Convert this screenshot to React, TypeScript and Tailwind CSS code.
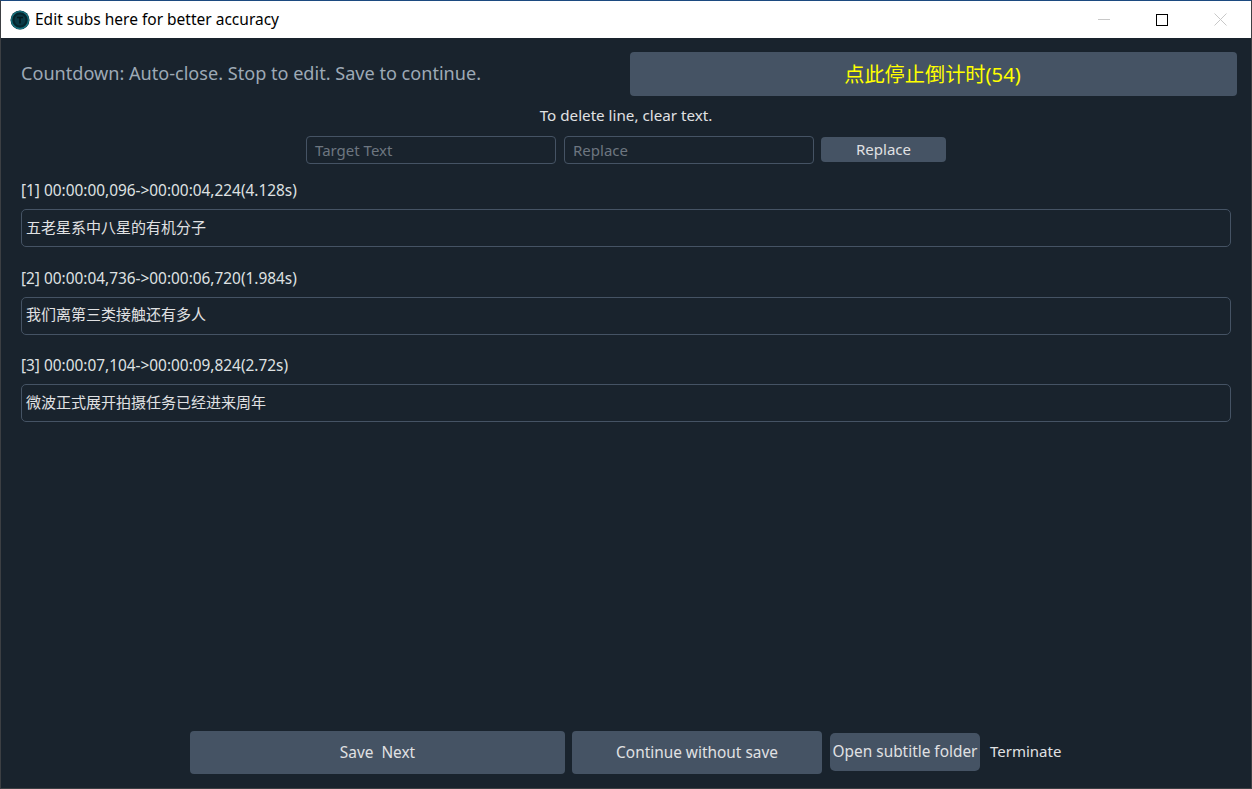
const fontFamily = "font-['Noto_Sans','Noto_Sans_CJK_SC',sans-serif]";

const rows = [
  { label: "[1] 00:00:00,096->00:00:04,224(4.128s)", text: "五老星系中八星的有机分子" },
  { label: "[2] 00:00:04,736->00:00:06,720(1.984s)", text: "我们离第三类接触还有多人" },
  { label: "[3] 00:00:07,104->00:00:09,824(2.72s)", text: "微波正式展开拍摄任务已经进来周年" },
];

function AppIcon() {
  return (
    <svg width="20" height="20" viewBox="0 0 20 20" className="shrink-0">
      <circle cx="10" cy="10" r="9.5" fill="#06262d" />
      <circle cx="10" cy="10" r="8.5" fill="none" stroke="#17727f" strokeWidth="1.5" />
      <circle cx="10" cy="10" r="5.5" fill="#0b3a45" />
      <path d="M7 7.5h6M10 7.5v6" stroke="#03181d" strokeWidth="1.6" fill="none" />
    </svg>
  );
}

function WindowButtons() {
  return (
    <div className="ml-auto flex items-center">
      <svg width="12" height="12" viewBox="0 0 12 12" className="mr-[46px]">
        <path d="M0 5.5h12" stroke="#c8c8c8" strokeWidth="1" />
      </svg>
      <svg width="12" height="12" viewBox="0 0 12 12" className="mr-[46px]">
        <rect x="0.5" y="0.5" width="11" height="11" fill="none" stroke="#000" strokeWidth="1" />
      </svg>
      <svg width="13" height="13" viewBox="0 0 13 13" className="mr-[24px]">
        <path d="M0.5 0.5l12 12M12.5 0.5l-12 12" stroke="#c8c8c8" strokeWidth="1" fill="none" />
      </svg>
    </div>
  );
}

function TitleBar() {
  return (
    <div className="flex h-[37px] shrink-0 items-center bg-white pl-[9px]">
      <AppIcon />
      <span className="ml-[5px] text-[15.5px] text-black">Edit subs here for better accuracy</span>
      <WindowButtons />
    </div>
  );
}

function SubRow({ label, text }: { label: string; text: string }) {
  return (
    <div className="mb-[21.5px] flex flex-col">
      <div className="flex h-[20px] items-center text-[15.4px] text-[#dfe1e2]">{label}</div>
      <div className="mt-[8px] flex h-[38px] items-center rounded-[5px] border border-[#455364] pb-[2px] pl-[4px] text-[15px] text-[#e0e1e3]">
        {text}
      </div>
    </div>
  );
}

export default function App() {
  return (
    <div className={`flex h-[789px] w-[1252px] flex-col overflow-hidden border border-[#3c3f43] border-t-[#1c4a80] bg-[#19232d] ${fontFamily}`}>
      <TitleBar />

      <div className="flex flex-1 flex-col pl-[20px] pr-[14px]">
        <div className="mt-[14px] flex h-[44px] items-center justify-between">
          <span className="text-[18.1px] text-[#9da9b5]">Countdown: Auto-close. Stop to edit. Save to continue.</span>
          <button className="h-[44px] w-[607px] rounded-[4px] bg-[#455364] pr-[2px] text-[20.2px] text-[#ffff00]">
            点此停止倒计时(54)
          </button>
        </div>

        <div className="mt-[9px] flex h-[20px] items-center justify-center pr-[6px] text-[15.2px] text-[#e0e1e3]">
          To delete line, clear text.
        </div>

        <div className="mt-[11px] flex h-[28px] items-start pl-[285px]">
          <div className="flex h-[28px] w-[250px] items-center rounded-[4px] border border-[#455364] pl-[8px] text-[15px] text-[#6d7680]">
            Target Text
          </div>
          <div className="ml-[8px] flex h-[28px] w-[250px] items-center rounded-[4px] border border-[#455364] pl-[8px] text-[15px] text-[#6d7680]">
            Replace
          </div>
          <button className="mt-[1px] ml-[7px] h-[25px] w-[125px] rounded-[4px] bg-[#455364] text-[15px] text-[#e0e1e3]">
            Replace
          </button>
        </div>

        <div className="mt-[17px] flex flex-col pr-[6px]">
          {rows.map((row) => (
            <SubRow key={row.label} label={row.label} text={row.text} />
          ))}
        </div>

        <div className="mt-auto mb-[14px] flex items-start pl-[169px] text-[15.4px] text-[#e0e1e3]">
          <button className="h-[43px] w-[375px] rounded-[4px] bg-[#455364] whitespace-pre">Save  Next</button>
          <button className="ml-[7px] h-[43px] w-[250px] rounded-[4px] bg-[#455364]">Continue without save</button>
          <button className="mt-[2px] ml-[8px] h-[38px] w-[150px] rounded-[5px] bg-[#455364] pb-[1px] whitespace-nowrap">Open subtitle folder</button>
          <span className="mt-[9px] ml-[10px] text-[15px]">Terminate</span>
        </div>
      </div>
    </div>
  );
}
